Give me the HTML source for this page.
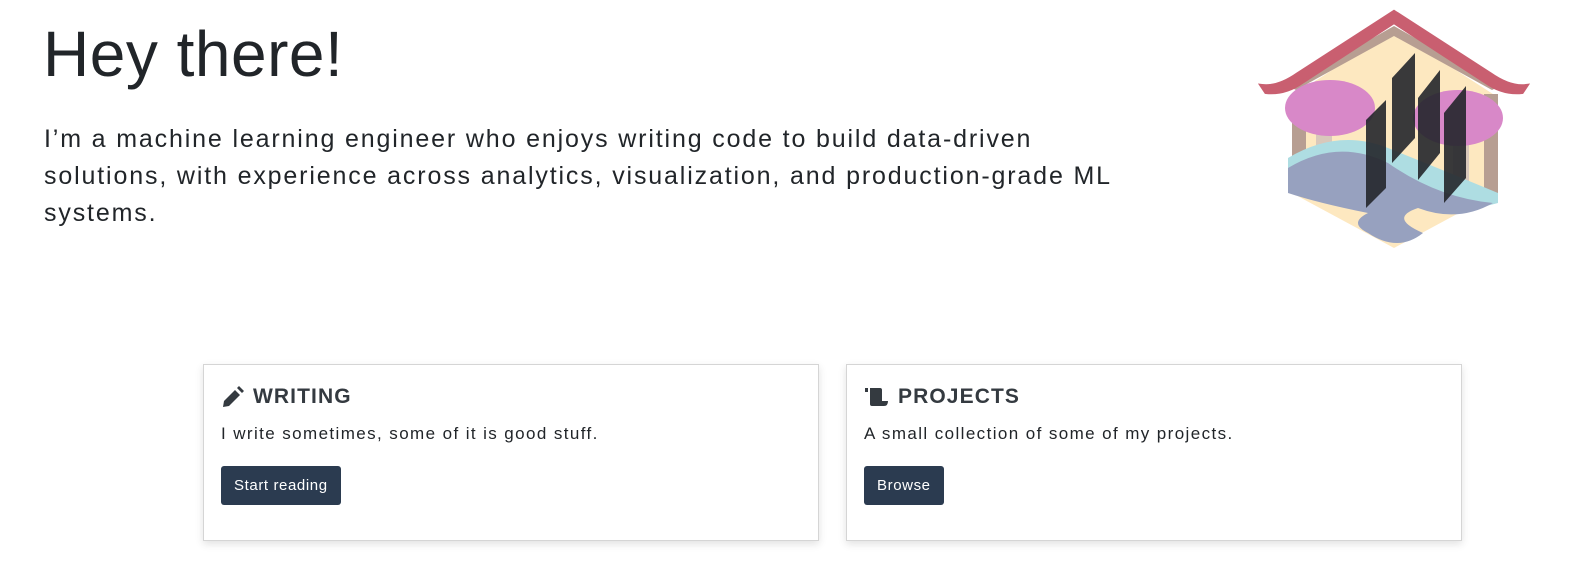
<!DOCTYPE html>
<html><head><meta charset="utf-8"><style>
body{margin:0;width:1584px;height:582px;background:#fff;font-family:"Liberation Sans","DejaVu Sans",sans-serif;color:#212529;position:relative;overflow:hidden}
h1{position:absolute;left:43px;top:14px;margin:0;font-weight:400;font-size:64px;line-height:80px;color:#212529;letter-spacing:.5px}
p.intro{position:absolute;left:44px;top:121px;margin:0;white-space:nowrap;font-size:25px;line-height:37px;letter-spacing:1.85px;color:#212529}
.card{position:absolute;top:364px;width:614px;height:175px;border:1px solid #d5d5d5;box-shadow:0 3px 8px rgba(0,0,0,.12);background:#fff}
.card h3{position:absolute;left:17px;top:20px;margin:0;font-size:21px;font-weight:700;color:#343a40;display:flex;align-items:center;gap:8px;letter-spacing:1.1px}
.card .d{position:absolute;left:17px;top:59px;font-size:17px;letter-spacing:1.4px;color:#212529}
.btn{position:absolute;left:17px;top:101px;height:39px;padding:0 13px;background:#2b3b50;color:#fff;border-radius:3px;font-size:15px;line-height:39px;letter-spacing:.6px}
</style></head><body>
<h1>Hey there!</h1>
<p class="intro">I’m a machine learning engineer who enjoys writing code to build data-driven<br>solutions, with experience across analytics, visualization, and production-grade ML<br>systems.</p>

<svg style="position:absolute;left:1258px;top:8px" width="272" height="250" viewBox="0 0 272 250">
<polygon points="136,22 34,88 34,185 136,240 238,185 238,88" fill="#fde8c0"/>
<rect x="34" y="86" width="14" height="100" fill="#b79e92"/>
<rect x="226" y="86" width="14" height="100" fill="#b79e92"/>
<path d="M136,18 L30,78 L38,82 L136,28 L234,82 L242,78Z" fill="#b79e92"/>
<path d="M4,78 Q20,80 40,66 L136,4 L232,66 Q252,80 268,78 L264,84 Q245,86 228,74 L136,14 L44,74 Q27,86 8,84Z" fill="#c95f70" stroke="#c95f70" stroke-width="4"/>
<rect x="58" y="110" width="16" height="50" fill="#d9c8bb"/>
<rect x="195" y="120" width="16" height="60" fill="#d9c8bb"/>
<ellipse cx="72" cy="100" rx="45" ry="28" fill="#d888c8"/>
<ellipse cx="200" cy="110" rx="45" ry="28" fill="#d888c8"/>
<path d="M30,150 Q80,120 130,140 T240,185 L240,195 Q190,210 130,170 T30,165Z" fill="#aedde2"/>
<path d="M30,160 Q80,130 130,155 Q180,190 235,195 Q200,215 160,200 Q130,210 165,225 Q140,245 110,225 Q90,215 110,205 Q60,195 30,185Z" fill="#97a1bf"/>
<polygon points="108,112 128,92 128,180 108,200" fill="#23262b" opacity=".9"/>
<polygon points="134,70 157,45 157,130 134,155" fill="#23262b" opacity=".9"/>
<polygon points="160,90 182,62 182,145 160,172" fill="#23262b" opacity=".9"/>
<polygon points="186,105 208,78 208,170 186,195" fill="#23262b" opacity=".9"/>
</svg>

<div class="card" style="left:203px">
<h3><svg width="24" height="22" viewBox="0 0 24 22"><path d="M2,21 L3,15 L14,4 L19,9 L8,20Z M16,2 L18,0 L23,5 L21,7Z" fill="#343a40"/></svg>WRITING</h3>
<div class="d">I write sometimes, some of it is good stuff.</div>
<div class="btn">Start reading</div>
</div>
<div class="card" style="left:846px">
<h3><svg width="26" height="22" viewBox="0 0 26 22"><path d="M1,2 h3 v4 h-3z M6,2 h10 q2,0 2,2 v11 h6 q0,5 -4,5 h-12 q-2,0 -2,-2z" fill="#343a40"/></svg>PROJECTS</h3>
<div class="d">A small collection of some of my projects.</div>
<div class="btn">Browse</div>
</div>
</body></html>
